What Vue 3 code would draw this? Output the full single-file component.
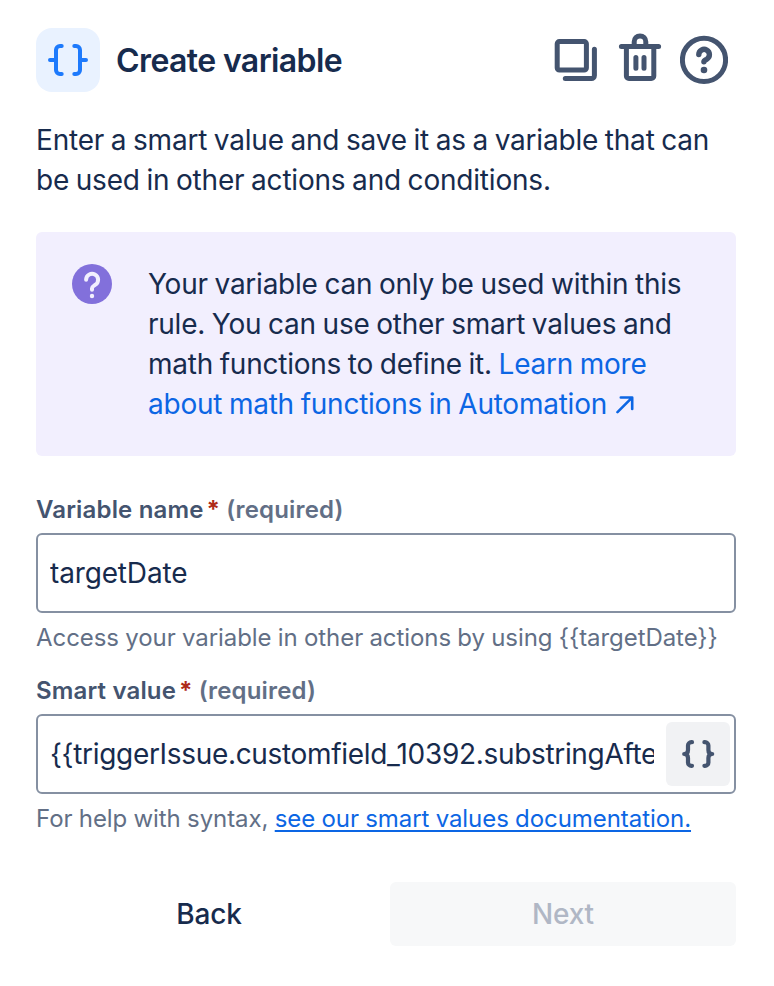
<template>
  <div class="variable-panel">
    <header class="panel-header">
      <div class="panel-badge">
        <svg width="64" height="64" viewBox="0 0 64 64" class="badge-icon">
          <path d="M25.7 18H24a4 4 0 0 0-4 4v20a4 4 0 0 0 4 4h1.7M14 32h6" />
          <path d="M38.3 18H40a4 4 0 0 1 4 4v20a4 4 0 0 1-4 4h-1.7M50 32h-6" />
        </svg>
      </div>
      <h1 class="panel-title">Create variable</h1>
      <div class="panel-actions">
        <button class="icon-button" aria-label="Duplicate">
          <svg width="48" height="56" viewBox="0 0 48 56">
            <rect x="5.2" y="9.5" width="29.2" height="28.6" rx="2.2" />
            <path d="M42.4 17.3v26.3a3 3 0 0 1-3 3H13.3" />
          </svg>
        </button>
        <button class="icon-button" aria-label="Delete">
          <svg width="48" height="56" viewBox="0 0 48 56">
            <path d="M5.4 14.6h37.2M10.4 15v29a2.5 2.5 0 0 0 2.5 2.5h22.4a2.5 2.5 0 0 0 2.5-2.5V15M18.2 14V9.7a5.8 5.8 0 0 1 11.6 0V14M19.9 25.6v10.6M28 25.6v10.6" />
          </svg>
        </button>
        <button class="icon-button" aria-label="Help">
          <svg width="48" height="56" viewBox="0 0 48 56">
            <circle cx="24" cy="27.9" r="21.6" />
            <path class="mark" d="M18.8 22.6a5.3 5.3 0 1 1 8 4.6c-1.9 1.1-2.9 1.5-2.9 2.5" />
            <circle class="dot" cx="24" cy="38" r="3.3" />
          </svg>
        </button>
      </div>
    </header>

    <p class="description">
      Enter a smart value and save it as a variable that can<br />
      be used in other actions and conditions.
    </p>

    <section class="info">
      <svg class="info-icon" width="40" height="40" viewBox="0 0 40 40">
        <circle cx="20" cy="20" r="20" fill="#8270db" />
        <path d="M14.1 15.7a6 6 0 1 1 9.4 5c-2.2 1.5-3.5 2-3.5 3.6v1.4" />
        <circle cx="20" cy="32" r="2.2" fill="#f2effe" />
      </svg>
      <p class="info-text">
        Your variable can only be used within this<br />
        rule. You can use other smart values and<br />
        math functions to define it.
        <a href="#" @click.prevent>Learn more<br />
          about math functions in Automation
          <svg class="arrow" width="18" height="18" viewBox="0 0 18 18">
            <path d="M1.5 16.2L16 1.7M4.8 1.5h11.4v11.4" />
          </svg></a>
      </p>
    </section>

    <div class="field">
      <label class="label" for="variable-name">Variable name<span class="star">*</span><span class="required">(required)</span></label>
      <div class="input-box">
        <input id="variable-name" v-model="variableName" class="input" type="text" />
      </div>
      <p class="helper">Access your variable in other actions by using {{ variableToken }}</p>
    </div>

    <div class="field">
      <label class="label" for="smart-value">Smart value<span class="star">*</span><span class="required">(required)</span></label>
      <div class="input-box">
        <input id="smart-value" v-model="smartValue" class="input smart" type="text" />
        <button class="smart-button" aria-label="Insert smart value">
          <svg width="64" height="64" viewBox="0 0 64 64">
            <path d="M26 20.2h-.6a3.4 3.4 0 0 0-3.4 3.4V28q0 4-3.8 4 3.8 0 3.8 4v4.4a3.4 3.4 0 0 0 3.4 3.4h.6" />
            <path d="M38.4 20.2h.6a3.4 3.4 0 0 1 3.4 3.4V28q0 4 3.8 4-3.8 0-3.8 4v4.4a3.4 3.4 0 0 1-3.4 3.4h-.6" />
          </svg>
        </button>
      </div>
      <p class="helper">For help with syntax, <a href="#" class="docs" @click.prevent>see our smart values documentation.</a></p>
    </div>

    <footer class="panel-footer">
      <button class="btn">Back</button>
      <button class="btn next" disabled>Next</button>
    </footer>
  </div>
</template>

<script setup>
import { computed, ref } from 'vue'

const variableName = ref('targetDate')
const smartValue = ref('{{triggerIssue.customfield_10392.substringAfter("due")}}')

const variableToken = computed(() => `{{${variableName.value}}}`)
</script>

<style>
body {
  margin: 0;
  background: #fff;
}
</style>

<style scoped>
.variable-panel {
  box-sizing: border-box;
  width: 774px;
  height: 986px;
  padding: 28px 38px 40px 36px;
  overflow: hidden;
  font-family: Inter, "Liberation Sans", sans-serif;
  font-size: 28px;
  font-weight: 430;
  line-height: 40px;
  color: #172b4d;
}

p,
h1 {
  margin: 0;
}

button,
input {
  border: 0;
  padding: 0;
  background: none;
  font: inherit;
  color: inherit;
  letter-spacing: inherit;
}

button {
  cursor: pointer;
}

svg {
  display: block;
  fill: none;
  stroke-linecap: round;
  stroke-linejoin: round;
}

.panel-header {
  display: flex;
  align-items: center;
  height: 64px;
}

.panel-badge {
  width: 64px;
  height: 64px;
  border-radius: 16px;
  background: #e9f2ff;
}

.badge-icon {
  stroke: #1d7afc;
  stroke-width: 4;
}

.panel-title {
  margin-left: 16px;
  padding-top: 2px;
  font-size: 32px;
  font-weight: 600;
  letter-spacing: -0.6px;
  white-space: nowrap;
}

.panel-actions {
  display: flex;
  gap: 16px;
  margin-left: auto;
  padding-right: 8px;
}

.icon-button {
  stroke: #44546f;
  stroke-width: 5;
}

.mark {
  stroke-width: 5.4;
}

.dot {
  fill: #44546f;
  stroke: none;
}

.description {
  margin-top: 28px;
  letter-spacing: -0.2px;
  word-spacing: -1px;
  white-space: nowrap;
}

.info {
  display: flex;
  gap: 36px;
  box-sizing: border-box;
  height: 224px;
  margin-top: 32px;
  padding: 32px 36px;
  border-radius: 6px;
  background: #f2effe;
}

.info-icon {
  flex: none;
  stroke: #f2effe;
  stroke-width: 4;
}

.info-icon circle {
  stroke: none;
}

.info-text {
  letter-spacing: -0.24px;
  word-spacing: -0.9px;
  white-space: nowrap;
}

a {
  color: #0c66e4;
  text-decoration: none;
}

.arrow {
  display: inline-block;
  margin-left: 2px;
  stroke: #0c66e4;
  stroke-width: 2.6;
}

.field {
  padding-top: 1px;
}

.info + .field {
  margin-top: 37px;
}

.label {
  display: flex;
  height: 32px;
  margin-bottom: 7px;
  font-size: 24px;
  line-height: 32px;
  font-weight: 600;
  letter-spacing: 0.16px;
  color: #44546f;
}

.star {
  margin-left: 3px;
  font-weight: 700;
  color: #ae2a19;
}

.required {
  margin-left: 6px;
  color: #626f86;
}

.input-box {
  display: flex;
  align-items: center;
  justify-content: space-between;
  box-sizing: border-box;
  height: 80px;
  padding: 0 4px 0 12px;
  border: 2px solid #8590a2;
  border-radius: 6px;
}

.input {
  flex: 1;
  min-width: 0;
  height: 40px;
  outline: none;
  letter-spacing: -0.15px;
}

.smart {
  flex: none;
  width: 604px;
  letter-spacing: -0.32px;
}

.smart-button {
  width: 64px;
  height: 64px;
  border-radius: 6px;
  background: #f1f2f4;
  stroke: #44546f;
  stroke-width: 4.2;
}

.helper {
  margin: 9px 0 20px;
  font-size: 24px;
  line-height: 32px;
  letter-spacing: -0.06px;
  word-spacing: -0.4px;
  color: #626f86;
  white-space: nowrap;
}

.docs {
  text-decoration: underline;
  text-decoration-thickness: 2px;
  text-underline-offset: 3px;
}

.panel-footer {
  display: grid;
  grid-template-columns: 346px 346px;
  gap: 8px;
  margin-top: 47px;
}

.btn {
  height: 64px;
  border-radius: 6px;
  font-weight: 530;
  letter-spacing: -0.2px;
}

.next {
  background: #f7f8f9;
  color: #b0b7c5;
  cursor: default;
}
</style>
